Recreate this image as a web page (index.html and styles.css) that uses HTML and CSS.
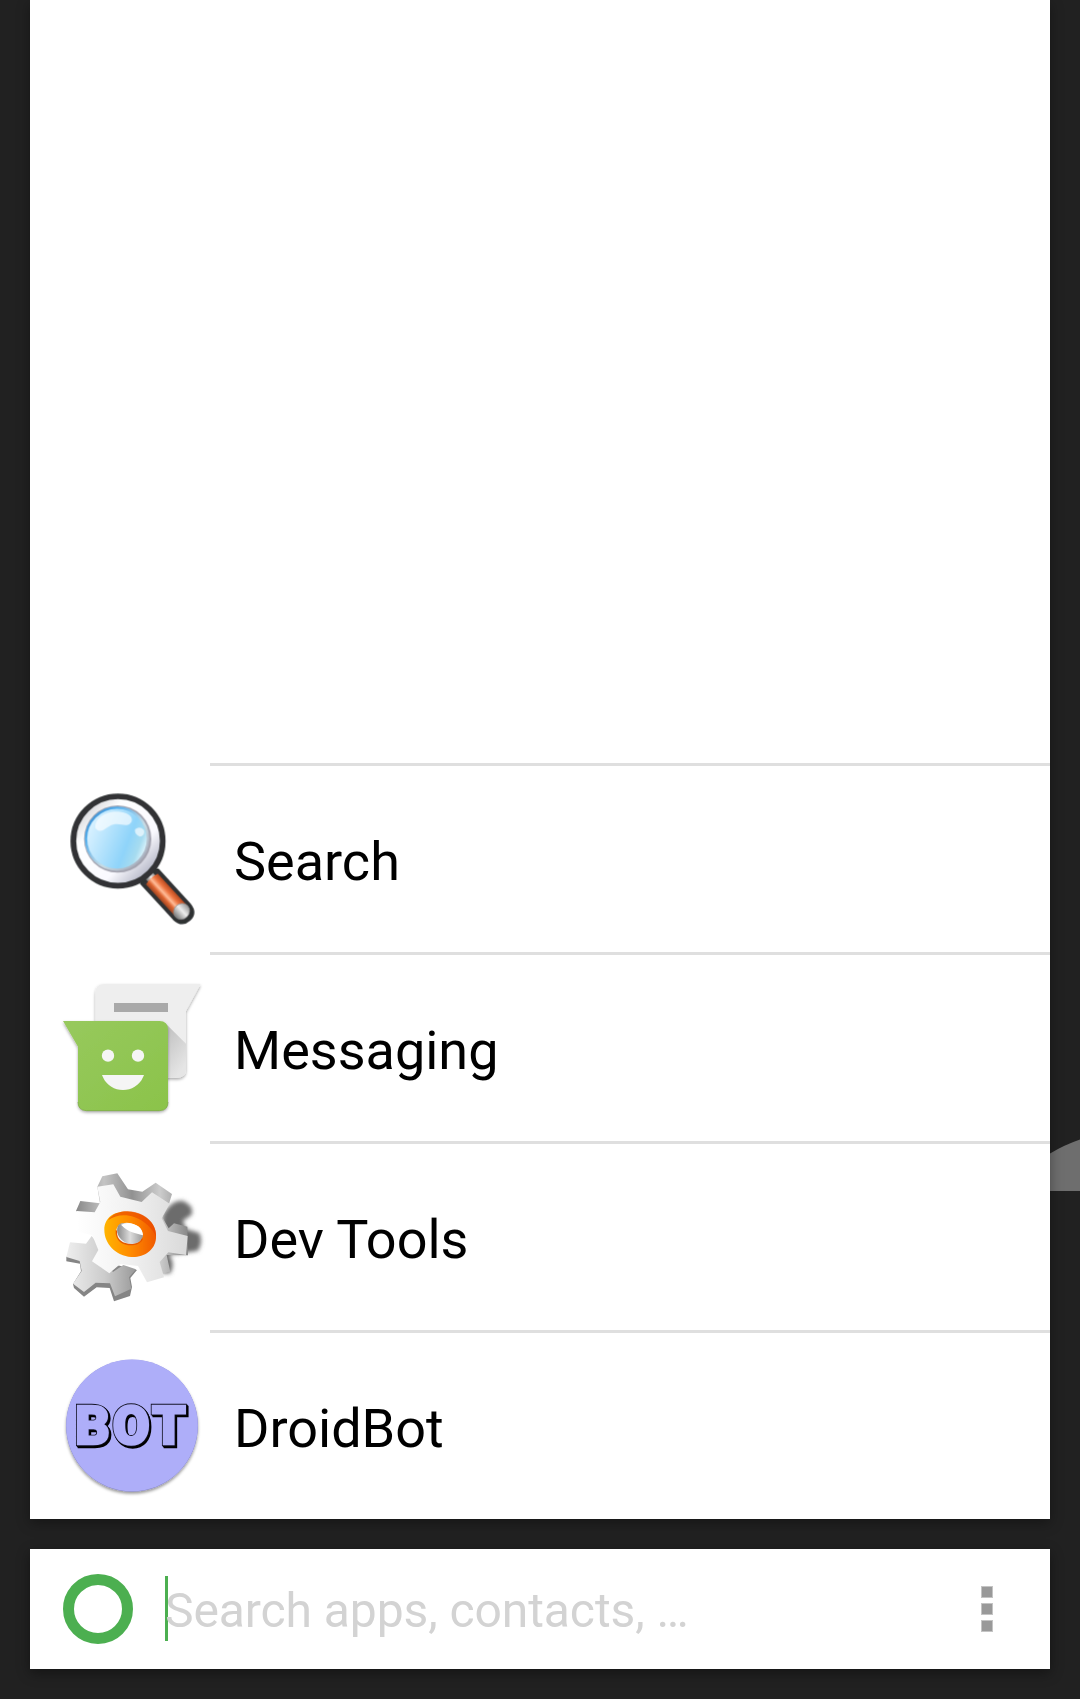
FILE: index.html
```html
<!DOCTYPE html>
<html lang="en">
<head>
<meta charset="utf-8">
<title>Launcher</title>
<link rel="stylesheet" href="styles.css">
</head>
<body>
<svg class="wallpaper" viewBox="0 0 30 54"><path d="M0 15.500Q14 7 30 1.500V53H0Z" fill="#6e6e6e"/></svg>
<main class="launcher">
  <ul class="results">
    <li class="row">
      <svg class="icon" viewBox="0 -3 480 480">
        <defs>
          <linearGradient id="rim" x1="0" y1="0" x2="1" y2="1"><stop offset="0" stop-color="#b5b5bd"/><stop offset=".3" stop-color="#fff"/><stop offset=".65" stop-color="#fafaff"/><stop offset="1" stop-color="#8588a0"/></linearGradient>
          <linearGradient id="glass" x1=".1" y1=".3" x2="1" y2=".65"><stop offset="0" stop-color="#d5f0ff"/><stop offset=".65" stop-color="#8fd4fa"/><stop offset=".85" stop-color="#a7dcf0"/><stop offset="1" stop-color="#eafaff"/></linearGradient>
          <linearGradient id="glassEdge" x1="0" y1="0" x2="1" y2="1"><stop offset="0" stop-color="#3079bd"/><stop offset=".25" stop-color="#54b0ef"/><stop offset=".6" stop-color="#c9dce4"/><stop offset="1" stop-color="#9a9cae"/></linearGradient>
          <linearGradient id="grip" x1="0" y1="0" x2="0" y2="1"><stop offset="0" stop-color="#b94a20"/><stop offset=".3" stop-color="#ed7440"/><stop offset=".55" stop-color="#ffbd99"/><stop offset=".75" stop-color="#df6632"/><stop offset="1" stop-color="#9f4522"/></linearGradient>
          <linearGradient id="metal" x1="0" y1="0" x2="0" y2="1"><stop offset="0" stop-color="#999"/><stop offset=".45" stop-color="#eee"/><stop offset="1" stop-color="#777"/></linearGradient>
          <filter id="soft"><feGaussianBlur stdDeviation="2.200"/></filter>
        </defs>
        <g filter="url(#soft)">
        <g transform="translate(203 182) rotate(47.5)">
          <path d="M128-18L146-31H286Q321-29 321 2T286 35H142L126 20Z" fill="#303234" stroke="#303234" stroke-width="6"/>
          <path d="M126-13H158V16H126Z" fill="url(#metal)"/>
          <path d="M154-22H286V26H154Q146 2 154-22Z" fill="url(#grip)"/>
          <ellipse cx="286" cy="2" rx="23" ry="25" fill="url(#metal)" stroke="#888" stroke-width="2"/>
        </g>
        <circle cx="204" cy="183" r="134" fill="url(#rim)" stroke="#303234" stroke-width="17"/>
        <circle cx="203" cy="177" r="101" fill="#a4a4b0"/>
        <circle cx="201" cy="176" r="93" fill="url(#glass)" stroke="url(#glassEdge)" stroke-width="7"/>
        <path d="M136 144C133 114 169 91 207 95C243 98 253 119 241 130C226 143 213 128 189 134C169 139 154 166 136 144Z" fill="#fff" opacity=".65"/>
        <path d="M255 148Q269 137 282 150Q286 165 270 170Q252 164 255 148Z" fill="#fff" opacity=".65"/>
        </g>
      </svg>
      <span class="label">Search</span>
    </li>
    <li class="row">
      <svg class="icon" viewBox="0 -6 480 480">
        <defs>
          <linearGradient id="green" x1="0" y1="0" x2="1" y2="1"><stop offset="0" stop-color="#97c95d"/><stop offset="1" stop-color="#8bc34a"/></linearGradient>
          <linearGradient id="fold" x1="0" y1="0" x2=".5" y2="1"><stop offset="0" stop-color="#bdbdbd"/><stop offset="1" stop-color="#e5e5e5"/></linearGradient>
          <filter id="drop" x="-10%" y="-10%" width="120%" height="125%"><feDropShadow dx="0" dy="5" stdDeviation="4" flood-opacity=".35"/></filter>
        </defs>
        <path d="M164 42H452L408 123V298Q408 323 382 323H136V70Q136 42 164 42Z" fill="#eee" filter="url(#drop)"/>
        <path d="M346 160L408 221V298Q408 323 382 323H346Z" fill="url(#fold)"/>
        <path d="M192 99H354V126H192Z" fill="#a9a9a9"/>
        <path d="M39 153H328Q354 153 354 179V396Q354 422 328 422H110Q84 422 84 396V230Z" fill="url(#green)" filter="url(#drop)"/>
        <path d="M84 396Q84 422 110 422H328Q354 422 354 396" fill="none" stroke="#72a33b" stroke-width="2"/>
        <circle cx="174" cy="257" r="18.500" fill="#f5f5f5"/><circle cx="264" cy="257" r="18.500" fill="#f5f5f5"/>
        <path d="M156 315H282C272 343 248 360 219 360S166 343 156 315Z" fill="#f5f5f5"/>
      </svg>
      <span class="label">Messaging</span>
    </li>
    <li class="row">
      <svg class="icon" viewBox="0 -9 480 480">
        <defs>
          <linearGradient id="face"><stop offset="0" stop-color="#fff"/><stop offset=".45" stop-color="#f2f2f2"/><stop offset="1" stop-color="#d9d9d9"/></linearGradient>
          <linearGradient id="side"><stop offset="0" stop-color="#888"/><stop offset=".25" stop-color="#c4c4c4"/><stop offset=".5" stop-color="#919191"/><stop offset=".75" stop-color="#ccc"/><stop offset="1" stop-color="#888"/></linearGradient>
          <linearGradient id="backGear"><stop offset="0" stop-color="#eee"/><stop offset=".55" stop-color="#ccc"/><stop offset="1" stop-color="#999"/></linearGradient>
          <linearGradient id="orange"><stop offset="0" stop-color="#ffb400"/><stop offset=".5" stop-color="#ff8b00"/><stop offset="1" stop-color="#f05a00"/></linearGradient>
          <linearGradient id="bore" x1="0" y1="0" x2="1" y2="0"><stop offset="0" stop-color="#888"/><stop offset=".5" stop-color="#ddd"/><stop offset="1" stop-color="#999"/></linearGradient>
          <filter id="haze" x="-20%" y="-20%" width="140%" height="140%"><feGaussianBlur stdDeviation="7"/></filter>
          <filter id="edge"><feGaussianBlur stdDeviation="2.200"/></filter>
        </defs>
        <path d="M338 166Q363 120 397 122Q433 136 425 164L398 183L410 208L448 219Q460 247 444 272L405 278L357 284Q377 310 361 340L336 340Z" fill="#6c6c6c" filter="url(#haze)"/>
        <g filter="url(#edge)">
        <path d="M49 290V304L90 311L93 334L69 372L72 384L102 410L140 382L179 384L192 424L240 408L246 381L241 354L261 330L200 315L110 280Z" fill="#858585"/>
        <path d="M60 247L108 251L125 228L150 258L150 320L190 335L220 315L258 328L237 352L244 386L195 409L180 370L137 368L102 396L69 371L95 333L89 303L49 291Z" fill="url(#backGear)"/>
        <path d="M142 80L157 49L202 40L234 88L277 95L317 68L366 102L357 132L336 170L356 205L372 190L412 200L414 286L350 285L361 336L335 341L280 275L140 180L78 153L91 123L150 130Z" fill="url(#side)"/>
        <path d="M142 80L190 73L211 110L275 126L306 97L359 131L335 175L354 213L413 228L408 285L355 277L329 306L342 352L291 367L264 318L211 312L178 340L126 304L145 270L127 226L85 215L80 153L134 157L151 126Z" fill="url(#face)"/>
        <path d="M163 210C163 169 198 151 239 155C288 159 323 194 318 235C315 272 281 293 244 291C197 288 163 251 163 210ZM199 211C197 241 218 255 248 254C280 247 286 219 265 200C237 180 202 186 199 211Z" fill="url(#orange)" fill-rule="evenodd"/>
        <path d="M174 181C196 147 249 149 278 165C307 181 319 205 318 230C298 183 229 143 174 181Z" fill="#e84800" opacity=".65"/>
        <path d="M210 191C237 185 265 208 279 228Q274 249 245 252C219 251 193 225 204 197Z" fill="url(#bore)"/>
        <path d="M213 194C246 182 279 199 279 226C254 217 240 221 213 194Z" fill="#fff"/>
        <path d="M199 211C197 241 218 255 248 254Q273 251 277 236" fill="none" stroke="#e45a00" stroke-width="4"/>
        </g>
      </svg>
      <span class="label">Dev Tools</span>
    </li>
    <li class="row">
      <svg class="icon" viewBox="0 3 480 480">
        <defs><filter id="disc" x="-10%" y="-10%" width="120%" height="125%"><feDropShadow dx="0" dy="6" stdDeviation="5" flood-opacity=".4"/></filter></defs>
        <circle cx="246" cy="242" r="198" fill="#8888c5" filter="url(#disc)"/>
        <circle cx="246" cy="241" r="197.500" fill="#aeaef9"/>
        <g class="bot">
          <text class="bot-depth" x="81 193 311" y="302">BOT</text>
          <text class="bot-depth" x="79 191 309" y="300">BOT</text>
          <text class="bot-outline" x="76 188 306" y="297">BOT</text>
          <text class="bot-face" x="76 188 306" y="297">BOT</text>
        </g>
      </svg>
      <span class="label">DroidBot</span>
    </li>
  </ul>
  <div class="searchbar">
    <span class="ring"></span>
    <span class="caret"></span>
    <span class="hint">Search apps, contacts, …</span>
    <span class="menu"><i></i><i></i><i></i></span>
  </div>
</main>
</body>
</html>
```
FILE: styles.css
```css
* { box-sizing: border-box; }
body {
  margin: 0;
  background: #212121;
  font-family: Roboto, sans-serif;
}
.wallpaper {
  position: absolute;
  left: 1050px;
  top: 1138px;
  width: 30px;
  height: 54px;
}
.launcher {
  position: relative;
  height: 1699px;
  padding: 0 30px 30px;
  display: flex;
  flex-direction: column;
  gap: 30px;
  overflow: hidden;
}
.results {
  flex: 1;
  margin: 0;
  padding: 0;
  list-style: none;
  display: flex;
  flex-direction: column;
  justify-content: flex-end;
  background: #fff;
  box-shadow: 0 4px 12px rgba(0, 0, 0, .35);
}
.row {
  height: 189px;
  padding: 3px 0 0 20px;
  display: flex;
  align-items: center;
  background: linear-gradient(#dfdfdf, #dfdfdf) 180px 0 / 840px 3px no-repeat;
}
.icon {
  width: 160px;
  height: 160px;
  flex: none;
}
.label {
  margin-left: 24px;
  padding-top: 6px;
  font-size: 54px;
  line-height: 64px;
  color: #000;
}
.bot text {
  font-family: Roboto, sans-serif;
  font-weight: 900;
  font-size: 160px;
  stroke-linejoin: miter;
}
.bot .bot-depth { fill: #000; stroke: #000; stroke-width: 13px; }
.bot .bot-outline { fill: #101020; stroke: #101020; stroke-width: 13px; }
.bot .bot-face { fill: #aeaef9; stroke: #aeaef9; stroke-width: 8px; }
.searchbar {
  height: 120px;
  padding: 0 57px 0 33px;
  display: flex;
  align-items: center;
  background: #fff;
  box-shadow: 0 4px 12px rgba(0, 0, 0, .4);
}
.ring {
  width: 70px;
  height: 70px;
  border: 11px solid #4caf50;
  border-radius: 50%;
}
.caret {
  width: 3px;
  height: 65px;
  margin: 0 0 1px 32px;
  background: #4caf50;
}
.hint {
  margin-left: -3px;
  padding-top: 3px;
  font-size: 48px;
  line-height: 56px;
  letter-spacing: -.08px;
  color: #d3d3d3;
}
.menu {
  margin-left: auto;
  display: flex;
  flex-direction: column;
  gap: 5px;
}
.menu i {
  width: 12px;
  height: 12px;
  background: #999;
  border: 1px solid #c4c4c4;
}
```
